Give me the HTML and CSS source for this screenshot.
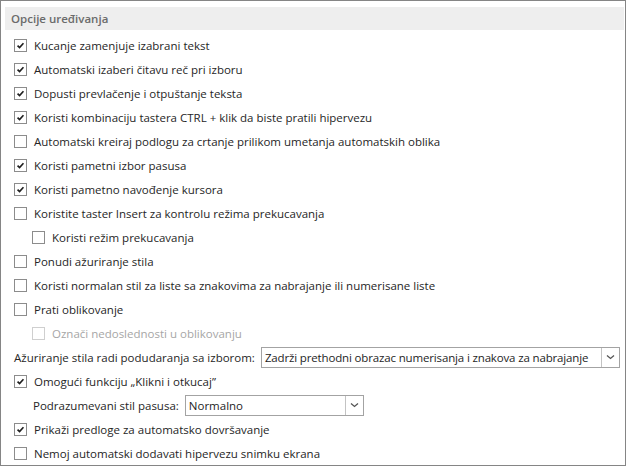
FILE: index.html
```html
<!DOCTYPE html>
<html lang="sr">
<head>
    <meta charset="UTF-8">
    <title>Opcije uređivanja</title>
    <link rel="stylesheet" href="styles.css">
</head>
<body>
    <div class="panel">
        <div class="section-title">Opcije uređivanja</div>
        <div class="options">
            <label class="row"><span class="box checked"><svg viewBox="0 0 13 13"><path d="M3 6.6l2.4 2.4L10 3.8"/></svg></span>Kucanje zamenjuje izabrani tekst</label>
            <label class="row"><span class="box checked"><svg viewBox="0 0 13 13"><path d="M3 6.6l2.4 2.4L10 3.8"/></svg></span>Automatski izaberi čitavu reč pri izboru</label>
            <label class="row"><span class="box checked"><svg viewBox="0 0 13 13"><path d="M3 6.6l2.4 2.4L10 3.8"/></svg></span>Dopusti prevlačenje i otpuštanje teksta</label>
            <label class="row"><span class="box checked"><svg viewBox="0 0 13 13"><path d="M3 6.6l2.4 2.4L10 3.8"/></svg></span>Koristi kombinaciju tastera CTRL + klik da biste pratili hipervezu</label>
            <label class="row"><span class="box"></span>Automatski kreiraj podlogu za crtanje prilikom umetanja automatskih oblika</label>
            <label class="row"><span class="box checked"><svg viewBox="0 0 13 13"><path d="M3 6.6l2.4 2.4L10 3.8"/></svg></span>Koristi pametni izbor pasusa</label>
            <label class="row"><span class="box checked"><svg viewBox="0 0 13 13"><path d="M3 6.6l2.4 2.4L10 3.8"/></svg></span>Koristi pametno navođenje kursora</label>
            <label class="row"><span class="box"></span>Koristite taster Insert za kontrolu režima prekucavanja</label>
            <label class="row sub"><span class="box"></span>Koristi režim prekucavanja</label>
            <label class="row"><span class="box"></span>Ponudi ažuriranje stila</label>
            <label class="row"><span class="box"></span>Koristi normalan stil za liste sa znakovima za nabrajanje ili numerisane liste</label>
            <label class="row"><span class="box"></span>Prati oblikovanje</label>
            <label class="row sub disabled"><span class="box"></span>Označi nedoslednosti u oblikovanju</label>
            <div class="row field">
                <span class="field-label">Ažuriranje stila radi podudaranja sa izborom:</span>
                <span class="select wide">
                    <span class="select-text">Zadrži prethodni obrazac numerisanja i znakova za nabrajanje</span>
                    <span class="select-arrow"><svg viewBox="0 0 9 6"><path d="M1 1.5l3.5 3 3.5-3"/></svg></span>
                </span>
            </div>
            <label class="row"><span class="box checked"><svg viewBox="0 0 13 13"><path d="M3 6.6l2.4 2.4L10 3.8"/></svg></span>Omogući funkciju „Klikni i otkucaj”</label>
            <div class="row field sub-field">
                <span class="field-label">Podrazumevani stil pasusa:</span>
                <span class="select narrow">
                    <span class="select-text">Normalno</span>
                    <span class="select-arrow"><svg viewBox="0 0 9 6"><path d="M1 1.5l3.5 3 3.5-3"/></svg></span>
                </span>
            </div>
            <label class="row"><span class="box checked"><svg viewBox="0 0 13 13"><path d="M3 6.6l2.4 2.4L10 3.8"/></svg></span>Prikaži predloge za automatsko dovršavanje</label>
            <label class="row"><span class="box"></span>Nemoj automatski dodavati hipervezu snimku ekrana</label>
        </div>
    </div>
</body>
</html>
```

FILE: styles.css
```css
body {
    margin: 0;
    background-color: #fff;
    font-family: "Open Sans", "Noto Sans", Arial, sans-serif;
    font-size: 11.5px;
    color: #262626;
}
.panel {
    width: 624px;
    height: 464px;
    border: 1px solid #858585;
    background-color: #fff;
    overflow: hidden;
}
.section-title {
    margin: 6px 1px 0 4px;
    height: 23px;
    line-height: 23px;
    padding-left: 6px;
    background-color: #eeeeee;
    color: #6b6b6b;
    font-weight: 600;
}
.options {
    padding-top: 3px;
}
.row {
    display: flex;
    align-items: center;
    height: 24px;
    padding-left: 13px;
    white-space: nowrap;
}
.row.sub {
    padding-left: 31px;
}
.box {
    flex: none;
    width: 11px;
    height: 11px;
    margin-right: 7px;
    border: 1px solid #8c8c8c;
    background-color: #fff;
    display: flex;
}
.box svg {
    width: 11px;
    height: 11px;
}
.box svg path {
    fill: none;
    stroke: #1e1e1e;
    stroke-width: 1.9;
}
.disabled {
    color: #a6a6a6;
}
.disabled .box {
    border-color: #cfcfcf;
}
.field-label {
    flex: none;
    margin-right: 6px;
}
.sub-field {
    padding-left: 32px;
}
.select {
    display: flex;
    align-items: center;
    height: 19px;
    border: 1px solid #a3a3a3;
    background-color: #fff;
    overflow: hidden;
}
.select.wide {
    flex: 1;
    margin-right: 5px;
}
.select.wide .select-text {
    letter-spacing: -0.15px;
}
.select.narrow {
    width: 177px;
}
.select-text {
    flex: 1;
    padding-left: 3px;
    color: #1e1e1e;
    overflow: hidden;
}
.select-arrow {
    flex: none;
    width: 17px;
    height: 19px;
    border-left: 1px solid #c3c3c3;
    display: flex;
    align-items: center;
    justify-content: center;
}
.select-arrow svg {
    width: 9px;
    height: 6px;
}
.select-arrow path {
    fill: none;
    stroke: #555;
    stroke-width: 1.3;
}
```
